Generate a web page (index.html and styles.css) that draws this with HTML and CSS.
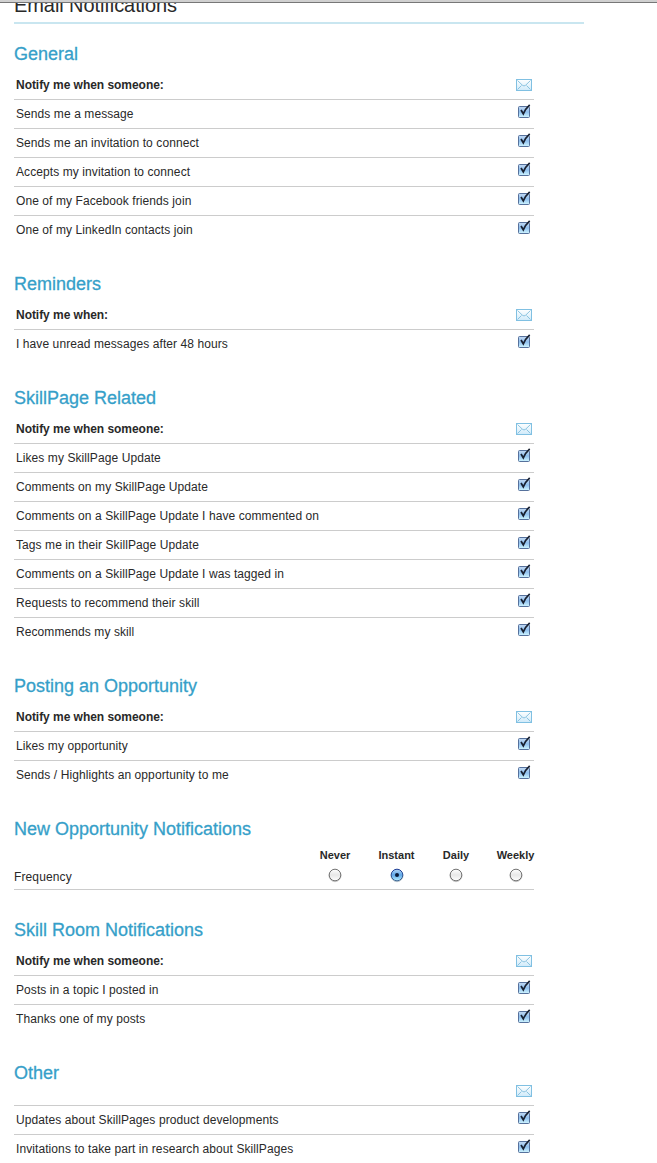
FILE: index.html
```
<!DOCTYPE html>
<html lang="en">
<head>
<meta charset="utf-8">
<title>Email Notifications</title>
<link rel="stylesheet" href="styles.css">
</head>
<body>
<svg class="defs" width="0" height="0" aria-hidden="true">
  <defs>
    <linearGradient id="boxfill" x1="0" y1="0" x2="0" y2="1"><stop offset="0" stop-color="#c3d9f2"/><stop offset=".5" stop-color="#8fc0ef"/><stop offset="1" stop-color="#d0f6ff"/></linearGradient>
    <linearGradient id="mailfill" x1="0" y1="0" x2="0" y2="1"><stop offset="0" stop-color="#ffffff"/><stop offset="1" stop-color="#cfeafa"/></linearGradient>
    <linearGradient id="offfill" x1="0" y1="0" x2="0" y2="1"><stop offset="0" stop-color="#ffffff"/><stop offset=".5" stop-color="#e8e8e8"/><stop offset="1" stop-color="#ffffff"/></linearGradient>
    <linearGradient id="onfill" x1="0" y1="0" x2="0" y2="1"><stop offset="0" stop-color="#b5d6f5"/><stop offset=".5" stop-color="#5fa8e8"/><stop offset="1" stop-color="#b8f0ff"/></linearGradient>
    <linearGradient id="onring" x1="0" y1="0" x2="0" y2="1"><stop offset="0" stop-color="#1c3c96"/><stop offset="1" stop-color="#416a96"/></linearGradient>
    <symbol id="mail" viewBox="0 0 16 12"><rect x=".5" y=".5" width="15" height="11" fill="url(#mailfill)" stroke="#80c0e2"/><path d="M1.5 1.5 6.5 6.3Q8 7.6 9.5 6.3L14.5 1.5M1.5 10.5 5.5 6.5M14.5 10.5 10.5 6.5" fill="none" stroke="#80bddc" stroke-width=".9"/></symbol>
    <symbol id="check" viewBox="0 0 14 16"><rect x="1.5" y="3.5" width="11" height="11" rx="1" fill="url(#boxfill)" stroke="#56719c"/><path d="M4 7 6.3 10.8Q8.5 5.6 12.7 1.8" fill="none" stroke="#182030" stroke-width="1.7"/></symbol>
    <symbol id="off" viewBox="0 0 14 15"><circle cx="7" cy="7.7" r="6" fill="none" stroke="#ccc"/><circle cx="7" cy="7" r="5.8" fill="url(#offfill)" stroke="#747474"/></symbol>
    <symbol id="on" viewBox="0 0 14 15"><circle cx="7" cy="7.7" r="6" fill="none" stroke="#bbc7d0"/><circle cx="7" cy="7" r="5.8" fill="url(#onfill)" stroke="url(#onring)"/><circle cx="7" cy="7" r="2" fill="#0b1c38"/></symbol>
  </defs>
</svg>
<div class="topbar"></div>
<main class="page">
  <h1 class="title">Email Notifications</h1>
  <section class="group first">
    <h2 class="heading">General</h2>
    <div class="row head"><span class="label">Notify me when someone:</span><svg class="mail"><use href="#mail"/></svg></div>
    <div class="row"><span class="label">Sends me a message</span><svg class="check"><use href="#check"/></svg></div>
    <div class="row"><span class="label">Sends me an invitation to connect</span><svg class="check"><use href="#check"/></svg></div>
    <div class="row"><span class="label">Accepts my invitation to connect</span><svg class="check"><use href="#check"/></svg></div>
    <div class="row"><span class="label">One of my Facebook friends join</span><svg class="check"><use href="#check"/></svg></div>
    <div class="row"><span class="label">One of my LinkedIn contacts join</span><svg class="check"><use href="#check"/></svg></div>
  </section>
  <section class="group">
    <h2 class="heading">Reminders</h2>
    <div class="row head"><span class="label">Notify me when:</span><svg class="mail"><use href="#mail"/></svg></div>
    <div class="row"><span class="label">I have unread messages after 48 hours</span><svg class="check"><use href="#check"/></svg></div>
  </section>
  <section class="group">
    <h2 class="heading">SkillPage Related</h2>
    <div class="row head"><span class="label">Notify me when someone:</span><svg class="mail"><use href="#mail"/></svg></div>
    <div class="row"><span class="label">Likes my SkillPage Update</span><svg class="check"><use href="#check"/></svg></div>
    <div class="row"><span class="label">Comments on my SkillPage Update</span><svg class="check"><use href="#check"/></svg></div>
    <div class="row"><span class="label">Comments on a SkillPage Update I have commented on</span><svg class="check"><use href="#check"/></svg></div>
    <div class="row"><span class="label">Tags me in their SkillPage Update</span><svg class="check"><use href="#check"/></svg></div>
    <div class="row"><span class="label">Comments on a SkillPage Update I was tagged in</span><svg class="check"><use href="#check"/></svg></div>
    <div class="row"><span class="label">Requests to recommend their skill</span><svg class="check"><use href="#check"/></svg></div>
    <div class="row"><span class="label">Recommends my skill</span><svg class="check"><use href="#check"/></svg></div>
  </section>
  <section class="group">
    <h2 class="heading">Posting an Opportunity</h2>
    <div class="row head"><span class="label">Notify me when someone:</span><svg class="mail"><use href="#mail"/></svg></div>
    <div class="row"><span class="label">Likes my opportunity</span><svg class="check"><use href="#check"/></svg></div>
    <div class="row"><span class="label">Sends / Highlights an opportunity to me</span><svg class="check"><use href="#check"/></svg></div>
  </section>
  <section class="group frequency">
    <h2 class="heading">New Opportunity Notifications</h2>
    <div class="choices">
      <span class="name">Frequency</span>
      <span class="choice"><b>Never</b><svg class="radio"><use href="#off"/></svg></span>
      <span class="choice"><b>Instant</b><svg class="radio"><use href="#on"/></svg></span>
      <span class="choice"><b>Daily</b><svg class="radio"><use href="#off"/></svg></span>
      <span class="choice"><b>Weekly</b><svg class="radio"><use href="#off"/></svg></span>
    </div>
  </section>
  <section class="group">
    <h2 class="heading">Skill Room Notifications</h2>
    <div class="row head"><span class="label">Notify me when someone:</span><svg class="mail"><use href="#mail"/></svg></div>
    <div class="row"><span class="label">Posts in a topic I posted in</span><svg class="check"><use href="#check"/></svg></div>
    <div class="row"><span class="label">Thanks one of my posts</span><svg class="check"><use href="#check"/></svg></div>
  </section>
  <section class="group other">
    <h2 class="heading">Other</h2>
    <div class="row head"><span class="label"></span><svg class="mail"><use href="#mail"/></svg></div>
    <div class="row"><span class="label">Updates about SkillPages product developments</span><svg class="check"><use href="#check"/></svg></div>
    <div class="row"><span class="label">Invitations to take part in research about SkillPages</span><svg class="check"><use href="#check"/></svg></div>
  </section>
</main>
</body>
</html>
```
FILE: styles.css
```
* { box-sizing: border-box; }
html, body { height: 1163px; overflow: hidden; }
body { margin: 0; background: #fff; color: #292929; font: 12px/16px "Liberation Sans", Arial, sans-serif; }
.defs { position: absolute; }
.topbar { height: 3px; background: #d0d0d0; border-bottom: 1px solid #777; }
.page { height: 1160px; overflow: hidden; padding-left: 14px; }
.title { width: 570px; height: 21px; margin: 0; border-bottom: 2px solid #c9e6f0; font-size: 20px; line-height: 5px; font-weight: 400; letter-spacing: -.08px; }
.group { width: 520px; }
.heading { height: 56px; margin: 0; padding-top: 28px; color: #369fc9; font-size: 18px; line-height: 22px; font-weight: 400; -webkit-text-stroke: .3px #369fc9; }
.first .heading { height: 47px; padding-top: 19px; }
.other .heading { height: 43px; }
.row { display: flex; justify-content: space-between; height: 29px; padding: 5px 2px 0; border-bottom: 1px solid #ccc; }
.row:last-child { border-bottom-color: transparent; }
.label { padding-top: 1px; letter-spacing: .085px; }
.head .label { font-weight: 700; letter-spacing: -.04px; }
.mail { width: 16px; height: 12px; margin-top: 3px; }
.check { width: 14px; height: 16px; margin: -2px 1px 0 0; }
.frequency { margin-bottom: 1px; }
.choices { display: grid; grid-template-columns: 291px 60px 63px 56px 63px; height: 44px; margin-right: -13px; position: relative; }
.choices::after { content: ""; position: absolute; left: 0; bottom: 0; width: 520px; border-bottom: 1px solid #ccc; }
.name { padding-top: 23px; letter-spacing: .12px; }
.choice { display: flex; flex-direction: column; align-items: center; }
.choice b { font-size: 11px; line-height: 16px; padding-top: 1px; }
.radio { width: 14px; height: 15px; margin-top: 5px; }
```
